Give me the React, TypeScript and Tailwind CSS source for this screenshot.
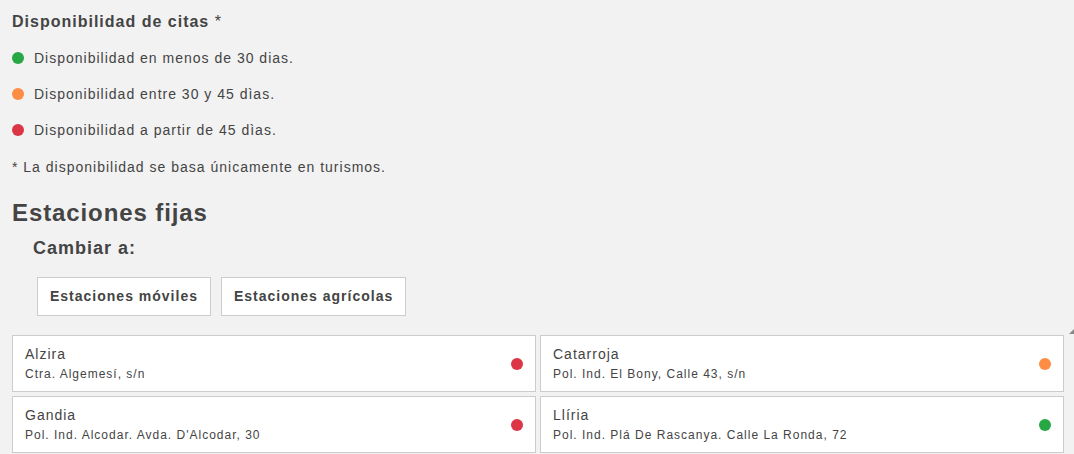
import React from "react";

const legend = [
  { c: "bg-[#28a745]", t: "Disponibilidad en menos de 30 dias." },
  { c: "bg-[#fd8c45]", t: "Disponibilidad entre 30 y 45 dìas." },
  { c: "bg-[#dc3545]", t: "Disponibilidad a partir de 45 dìas." },
];

const stations = [
  { n: "Alzira", a: "Ctra. Algemesí, s/n", c: "bg-[#dc3545]" },
  { n: "Catarroja", a: "Pol. Ind. El Bony, Calle 43, s/n", c: "bg-[#fd8c45]" },
  { n: "Gandia", a: "Pol. Ind. Alcodar. Avda. D'Alcodar, 30", c: "bg-[#dc3545]" },
  { n: "Llíria", a: "Pol. Ind. Plá De Rascanya. Calle La Ronda, 72", c: "bg-[#28a745]" },
];

export default function App() {
  return (
    <div
      className="relative w-[1074px] h-[454px] overflow-hidden bg-[#f2f2f2] text-[#444] pl-[12px] pr-[10px] pt-[13px]"
      style={{ fontFamily: '"Liberation Sans", Arial, sans-serif' }}
    >
      <div className="text-[16px] font-bold tracking-[1px] leading-[18px]">
        Disponibilidad de citas <span className="font-normal">*</span>
      </div>
      <div className="mt-[18px] flex flex-col gap-[18px]">
        {legend.map((l) => (
          <div key={l.t} className="flex items-center h-[18px]">
            <span className={`w-[12px] h-[12px] rounded-full ${l.c}`} />
            <span className="ml-[10px] text-[14px] tracking-[1px]">{l.t}</span>
          </div>
        ))}
      </div>
      <div className="mt-[19px] text-[14px] tracking-[1px] leading-[18px]">
        * La disponibilidad se basa únicamente en turismos.
      </div>
      <h2 className="mt-[23px] text-[24px] font-bold leading-[28px] tracking-[0.9px]">Estaciones fijas</h2>
      <div className="ml-[21px] mt-[11px] text-[18px] font-bold tracking-[1px] leading-[20px]">Cambiar a:</div>
      <div className="ml-[25px] mt-[19px] flex gap-[10px]">
        <button className="h-[39px] px-[12px] bg-white border border-[#ccc] text-[14px] font-bold tracking-[1px] text-[#444]">
          Estaciones móviles
        </button>
        <button className="h-[39px] px-[12px] bg-white border border-[#ccc] text-[14px] font-bold tracking-[1px] text-[#444]">
          Estaciones agrícolas
        </button>
      </div>
      <div className="mt-[19px] grid grid-cols-2 gap-x-[4px] gap-y-[4px]">
        {stations.map((s) => (
          <div key={s.n} className="h-[57px] bg-white border border-[#ccc] flex items-center pl-[12px] pr-[12px]">
            <div className="flex-1">
              <div className="text-[14px] tracking-[1px] leading-[18px]">{s.n}</div>
              <div className="mt-[3px] text-[12px] tracking-[1px] leading-[16px]">{s.a}</div>
            </div>
            <span className={`w-[12px] h-[12px] rounded-full ${s.c}`} />
          </div>
        ))}
      </div>
      <div className="absolute right-0 top-[329px] w-0 h-0 border-l-[5px] border-l-transparent border-b-[5px] border-b-[#888]" />
    </div>
  );
}
